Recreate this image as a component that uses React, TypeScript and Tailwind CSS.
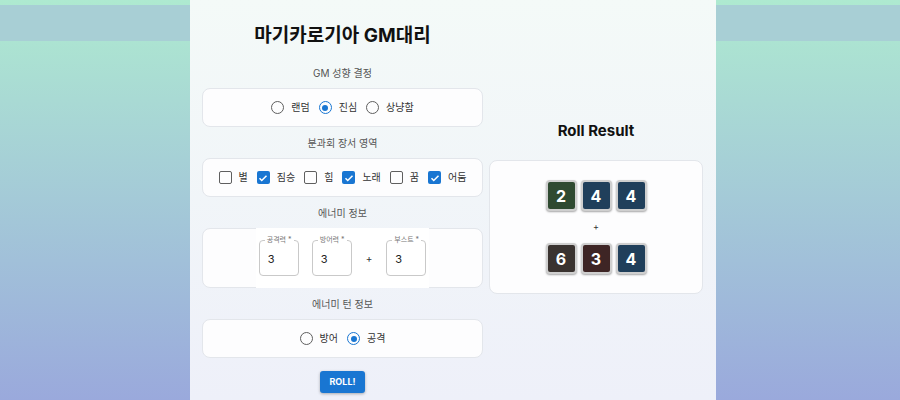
import React from "react";

const FONT = { fontFamily: '"Inter", "Noto Sans CJK KR", sans-serif' };

function Radio({ checked, label }: { checked?: boolean; label: string }) {
  return (
    <label className="flex items-center gap-[7px]">
      <span
        className={
          "flex h-[13px] w-[13px] items-center justify-center rounded-full border-[1.5px] " +
          (checked ? "border-[#1976d2]" : "border-[#5f5f5f]")
        }
      >
        {checked && <span className="h-[6px] w-[6px] rounded-full bg-[#1976d2]" />}
      </span>
      <span className="text-[10px] text-[#333]">{label}</span>
    </label>
  );
}

function Check({ checked, label }: { checked?: boolean; label: string }) {
  return (
    <label className="flex items-center gap-[7px]">
      {checked ? (
        <span className="flex h-[13px] w-[13px] items-center justify-center rounded-[2px] bg-[#1976d2]">
          <svg viewBox="0 0 24 24" className="h-[12px] w-[12px]">
            <path d="M5 12.5l4.5 4.5L19 7.5" fill="none" stroke="white" strokeWidth="3" />
          </svg>
        </span>
      ) : (
        <span className="h-[13px] w-[13px] rounded-[2px] border-[1.5px] border-[#5f5f5f]" />
      )}
      <span className="text-[10px] text-[#333]">{label}</span>
    </label>
  );
}

function Field({ label }: { label: string }) {
  return (
    <div className="relative h-[36px] w-[40px] rounded-[4px] border border-[#c9c9c9] bg-white">
      <span className="absolute -top-[6px] left-[5px] bg-white px-[2px] text-[7px] leading-[10px] text-[#777]">
        {label} *
      </span>
      <span className="absolute left-[8px] top-[10px] text-[11px] text-[#222]">3</span>
    </div>
  );
}

function Die({ n, color }: { n: number; color: string }) {
  return (
    <div
      className="flex h-[31px] w-[31px] items-center justify-center rounded-[4px] border-2 border-[#cfcfcf] shadow-[0_1px_2px_rgba(0,0,0,0.35)]"
      style={{ backgroundColor: color }}
    >
      <span className="text-[16px] font-bold text-white">{n}</span>
    </div>
  );
}

function Heading({ children }: { children: React.ReactNode }) {
  return (
    <div className="mb-[7px] mt-[8px] text-center text-[10px] leading-[16px] text-[#555]">
      {children}
    </div>
  );
}

const card = "rounded-[8px] border border-[#e3e6eb] bg-[#fdfdfe]";

export default function App() {
  return (
    <div
      className="relative h-[400px] w-[900px] overflow-hidden bg-gradient-to-b from-[#aeead0] to-[#9aa9dc]"
      style={FONT}
    >
      <div className="absolute left-0 right-0 top-[5px] h-[36px] bg-[#a8cfd5]" />
      <div className="relative ml-[190px] flex h-[400px] w-[526px] gap-[6px] bg-gradient-to-b from-[#f4faf8] to-[#eef0f9] px-[12px]">
        <div className="w-[281px]">
          <h1 className="pt-[24px] text-center text-[19px] font-bold leading-[24px] text-[#111]">
            마기카로기아 GM대리
          </h1>
          <div className="h-[9px]" />
          <Heading>GM 성향 결정</Heading>
          <div className={card + " flex h-[39px] items-center justify-center gap-[9px]"}>
            <Radio label="랜덤" />
            <Radio label="진심" checked />
            <Radio label="상냥함" />
          </div>
          <Heading>분과회 장서 영역</Heading>
          <div className={card + " flex h-[39px] items-center justify-center gap-[9px]"}>
            <Check label="별" />
            <Check label="짐승" checked />
            <Check label="힘" />
            <Check label="노래" checked />
            <Check label="꿈" />
            <Check label="어둠" checked />
          </div>
          <Heading>에너미 정보</Heading>
          <div className={card + " flex h-[60px] items-center justify-center"}>
            <div className="flex h-[60px] items-center gap-[13px] bg-white px-[3px]">
              <Field label="공격력" />
              <Field label="방어력" />
              <span className="px-[1px] text-[10px] text-[#333]">+</span>
              <Field label="부스트" />
            </div>
          </div>
          <Heading>에너미 턴 정보</Heading>
          <div className={card + " flex h-[39px] items-center justify-center gap-[9px]"}>
            <Radio label="방어" />
            <Radio label="공격" checked />
          </div>
          <div className="mt-[13px] flex justify-center">
            <button className="h-[22px] w-[45px] rounded-[3px] bg-[#1976d2] text-[9px] font-bold text-white shadow-[0_1px_3px_rgba(0,0,0,0.3)]">
              ROLL!
            </button>
          </div>
        </div>
        <div className="w-[214px] pt-[121px]">
          <h2 className="text-center text-[15px] font-bold leading-[20px] text-[#111]">
            Roll Result
          </h2>
          <div className={card + " mt-[19px] flex h-[134px] flex-col items-center pt-[19px]"}>
            <div className="flex gap-[4px]">
              <Die n={2} color="#2f4a31" />
              <Die n={4} color="#203f5b" />
              <Die n={4} color="#203f5b" />
            </div>
            <div className="my-[3px] text-[9px] leading-[26px] text-[#333]">+</div>
            <div className="flex gap-[4px]">
              <Die n={6} color="#3a3330" />
              <Die n={3} color="#3e2525" />
              <Die n={4} color="#203f5b" />
            </div>
          </div>
        </div>
      </div>
    </div>
  );
}
